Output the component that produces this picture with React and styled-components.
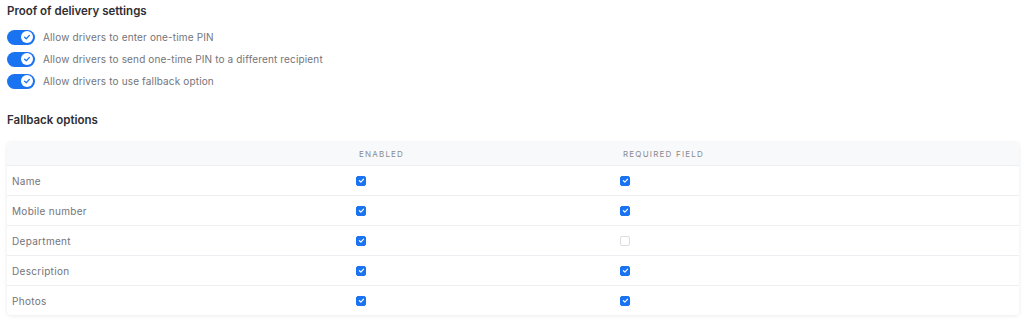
import React from "react";
import styled, { createGlobalStyle } from "styled-components";

const Global = createGlobalStyle`
  html, body { margin: 0; padding: 0; background: #fff; }
  body { font-family: Inter, "Open Sans", "Liberation Sans", sans-serif; color: #333; }
  * { box-sizing: border-box; }
`;

const Page = styled.div`
  width: 1024px;
  height: 325px;
  padding: 4px 7px 0 7px;
  display: flex;
  flex-direction: column;
`;

const Heading = styled.h2`
  margin: 0;
  font-size: 11.5px;
  font-weight: 600;
  color: #2f2f33;
  line-height: 14px;
  margin-top: ${(p) => p.$top || 0}px;
`;

const ToggleList = styled.div`
  display: flex;
  flex-direction: column;
  gap: 8px;
  margin-top: 12px;
`;

const ToggleRow = styled.label`
  display: flex;
  align-items: center;
  gap: 8px;
  height: 14px;
  font-size: 10px;
  letter-spacing: 0.15px;
  color: #747479;
`;

const Track = styled.span`
  width: 28px;
  height: 15px;
  border-radius: 8px;
  background: #1a73f0;
  display: flex;
  align-items: center;
  justify-content: flex-end;
  padding-right: 2px;
  flex-shrink: 0;
`;

const Knob = styled.span`
  width: 12px;
  height: 12px;
  border-radius: 50%;
  background: #fff;
  display: flex;
  align-items: center;
  justify-content: center;
`;

const Card = styled.div`
  margin-top: 15px;
  width: 1012px;
  border-radius: 4px;
  box-shadow: 0 1px 4px rgba(0, 0, 0, 0.08), 0 0 1px rgba(0, 0, 0, 0.06);
  overflow: hidden;
  background: #fff;
`;

const Grid = styled.div`
  display: grid;
  grid-template-columns: 349px 264px 1fr;
  align-items: center;
  height: ${(p) => (p.$header ? 23 : 30)}px;
  background: ${(p) => (p.$header ? "#f8f9fb" : "#fff")};
  border-top: ${(p) => (p.$header ? "none" : "1px solid #eceef1")};
`;

const HeadCell = styled.div`
  font-size: 8px;
  letter-spacing: 1.2px;
  color: #8a8a8f;
  padding-left: ${(p) => p.$pl || 0}px;
`;

const Label = styled.div`
  font-size: 10px;
  letter-spacing: 0.3px;
  color: #747479;
  padding-left: 5px;
`;

const BoxCell = styled.div`
  display: flex;
  align-items: center;
`;

const Box = styled.span`
  width: 10px;
  height: 10px;
  border-radius: 2px;
  background: ${(p) => (p.$on ? "#1a73f0" : "#fff")};
  border: 1px solid ${(p) => (p.$on ? "#1a73f0" : "#dcdde0")};
  display: flex;
  align-items: center;
  justify-content: center;
`;

const Check = ({ color = "#fff", size = 8 }) => (
  <svg width={size} height={size} viewBox="0 0 10 10">
    <path d="M2 5.3 L4.1 7.2 L8 3" fill="none" stroke={color} strokeWidth="1.6" strokeLinecap="round" strokeLinejoin="round" />
  </svg>
);

const toggles = [
  "Allow drivers to enter one-time PIN",
  "Allow drivers to send one-time PIN to a different recipient",
  "Allow drivers to use fallback option",
];

const rows = [
  ["Name", true, true],
  ["Mobile number", true, true],
  ["Department", true, false],
  ["Description", true, true],
  ["Photos", true, true],
];

export default function App() {
  return (
    <Page>
      <Global />
      <Heading>Proof of delivery settings</Heading>
      <ToggleList>
        {toggles.map((t) => (
          <ToggleRow key={t}>
            <Track>
              <Knob>
                <Check color="#1a73f0" size={8} />
              </Knob>
            </Track>
            {t}
          </ToggleRow>
        ))}
      </ToggleList>
      <Heading $top={25}>Fallback options</Heading>
      <Card>
        <Grid $header>
          <HeadCell />
          <HeadCell $pl={3}>ENABLED</HeadCell>
          <HeadCell $pl={3}>REQUIRED FIELD</HeadCell>
        </Grid>
        {rows.map(([name, a, b]) => (
          <Grid key={name}>
            <Label>{name}</Label>
            <BoxCell>
              <Box $on={a}>{a && <Check size={7} />}</Box>
            </BoxCell>
            <BoxCell>
              <Box $on={b}>{b && <Check size={7} />}</Box>
            </BoxCell>
          </Grid>
        ))}
      </Card>
    </Page>
  );
}
